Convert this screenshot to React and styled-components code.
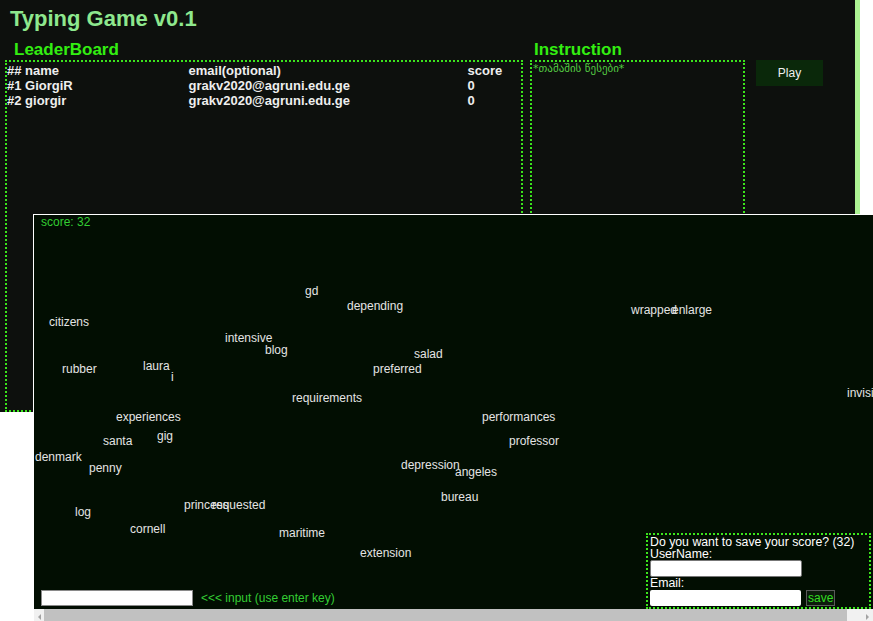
import React from 'react';
import styled, { createGlobalStyle } from 'styled-components';

const GlobalStyle = createGlobalStyle`
  html, body {
    margin: 0;
    padding: 0;
    background: #ffffff;
    overflow: hidden;
  }
  body {
    font-family: 'Liberation Sans', Arial, sans-serif;
  }
`;

const Page = styled.div`
  position: relative;
  width: 873px;
  height: 621px;
  overflow: hidden;
`;

const Main = styled.div`
  width: 860px;
  box-sizing: border-box;
  background: #0d100d;
  border-right: 5px solid #acf393;
  padding: 6px 0 0 5px;
`;

const Title = styled.h1`
  margin: 0 0 0 5px;
  font-size: 22px;
  line-height: 25px;
  font-weight: bold;
  color: #8ee88e;
`;

const Columns = styled.div`
  display: flex;
  align-items: flex-start;
  margin-top: 9px;
`;

const Column = styled.div`
  width: ${(p) => p.width}px;
  margin-left: ${(p) => p.gap || 0}px;
`;

const Heading = styled.h2`
  margin: 0 0 0 ${(p) => p.indent}px;
  font-size: 17px;
  line-height: 20px;
  font-weight: bold;
  color: #33ee11;
`;

const DottedBox = styled.div`
  height: 348px;
  border: 2px dotted #3be41c;
`;

const BoardRow = styled.div`
  display: grid;
  grid-template-columns: 181.5px 279px auto;
  font-size: 13px;
  line-height: 15px;
  font-weight: bold;
  color: #eeeeee;
  &:first-child {
    padding-top: 1px;
  }
`;

const Rules = styled.div`
  padding-left: 1px;
  font-family: 'DejaVu Sans', 'Noto Sans', sans-serif;
  font-size: 11px;
  line-height: 14px;
  color: #55cc44;
`;

const PlayButton = styled.button`
  width: 67px;
  height: 26px;
  margin: 20px 0 0 11px;
  padding: 0;
  border: none;
  background: #0a280a;
  color: #f0f0f0;
  font-family: 'Liberation Sans', Arial, sans-serif;
  font-size: 12px;
`;

const GamePanel = styled.div`
  position: absolute;
  left: 33px;
  top: 214px;
  width: 840px;
  height: 410px;
  box-sizing: border-box;
  border-top: 1px solid #ffffff;
  border-left: 1px solid #ffffff;
  background: #020e02;
  overflow: hidden;
  display: flex;
  flex-direction: column;
`;

const Score = styled.div`
  padding-left: 7px;
  font-size: 12px;
  line-height: 14px;
  color: #33cc33;
`;

const Word = styled.span`
  position: absolute;
  font-size: 12px;
  line-height: 14px;
  color: #e4e4e4;
  white-space: nowrap;
`;

const InputBar = styled.div`
  display: flex;
  align-items: center;
  margin-top: auto;
  margin-bottom: 3px;
  padding-left: 7px;
`;

const WordInput = styled.input`
  width: 152px;
  height: 16px;
  box-sizing: border-box;
  border: 1px solid #8a8a8a;
  background: #ffffff;
  padding: 0;
`;

const Hint = styled.span`
  margin-left: 8px;
  font-size: 12px;
  color: #33cc33;
`;

const ScrollBar = styled.div`
  display: flex;
  align-items: stretch;
  height: 15px;
  flex-shrink: 0;
  background: #f1f1f1;
`;

const ScrollArrow = styled.div`
  display: flex;
  align-items: center;
  justify-content: ${(p) => (p.side === 'left' ? 'flex-start' : 'flex-end')};
  width: ${(p) => p.width}px;
  padding: 0 4px;
  box-sizing: border-box;
  &::before {
    content: '';
    border-top: 3px solid transparent;
    border-bottom: 3px solid transparent;
    ${(p) =>
      p.side === 'left'
        ? 'border-right: 3px solid #a3a3a3;'
        : 'border-left: 3px solid #a3a3a3;'}
  }
`;

const ScrollThumb = styled.div`
  flex: 1;
  background: #c1c1c1;
`;

const SaveBox = styled.div`
  position: absolute;
  right: 2px;
  bottom: 15px;
  width: 225px;
  box-sizing: border-box;
  border: 2px dotted #3be41c;
  padding: 1px 2px 1px;
  font-size: 12.3px;
  line-height: 12px;
  color: #ffffff;
`;

const SaveInput = styled.input`
  display: block;
  width: ${(p) => p.width}px;
  height: ${(p) => p.height}px;
  box-sizing: border-box;
  margin: 0;
  padding: 0;
  background: #ffffff;
  border: ${(p) => (p.focused ? '1px solid #777777' : 'none')};
  border-radius: 2px;
`;

const EmailRow = styled.div`
  display: flex;
  align-items: center;
  gap: 5px;
  margin-top: 1px;
`;

const SaveButton = styled.button`
  width: 29px;
  height: 16px;
  padding: 0 0 0 1px;
  text-align: left;
  background: #0b1a0b;
  border: 1px solid #5a5a5a;
  color: #33dd22;
  font-family: 'Liberation Sans', Arial, sans-serif;
  font-size: 12px;
  line-height: 14px;
`;

const leaders = [
  { rank: '##', name: 'name', email: 'email(optional)', score: 'score' },
  { rank: '#1', name: 'GiorgiR', email: 'grakv2020@agruni.edu.ge', score: '0' },
  { rank: '#2', name: 'giorgir', email: 'grakv2020@agruni.edu.ge', score: '0' },
];

const words = [
  ['gd', 271, 69],
  ['depending', 313, 84],
  ['citizens', 15, 100],
  ['wrapped', 597, 88],
  ['enlarge', 638, 88],
  ['intensive', 191, 116],
  ['blog', 231, 128],
  ['salad', 380, 132],
  ['laura', 109, 144],
  ['i', 137, 155],
  ['rubber', 28, 147],
  ['preferred', 339, 147],
  ['invisible', 813, 171],
  ['requirements', 258, 176],
  ['experiences', 82, 195],
  ['performances', 448, 195],
  ['santa', 69, 219],
  ['gig', 123, 214],
  ['professor', 475, 219],
  ['denmark', 1, 235],
  ['penny', 55, 246],
  ['depression', 367, 243],
  ['angeles', 421, 250],
  ['bureau', 407, 275],
  ['princess', 150, 283],
  ['requested', 178, 283],
  ['log', 41, 290],
  ['cornell', 96, 307],
  ['maritime', 245, 311],
  ['extension', 326, 331],
];

const App = () => {
  return (
    <Page>
      <GlobalStyle />
      <Main>
        <Title>Typing Game v0.1</Title>
        <Columns>
          <Column width={518}>
            <Heading indent={9}>LeaderBoard</Heading>
            <DottedBox>
              {leaders.map((l) => (
                <BoardRow key={l.rank}>
                  <span>
                    {l.rank} {l.name}
                  </span>
                  <span>{l.email}</span>
                  <span>{l.score}</span>
                </BoardRow>
              ))}
            </DottedBox>
          </Column>
          <Column width={215} gap={7}>
            <Heading indent={4}>Instruction</Heading>
            <DottedBox>
              <Rules>*თამაშის წესები*</Rules>
            </DottedBox>
          </Column>
          <PlayButton>Play</PlayButton>
        </Columns>
      </Main>

      <GamePanel>
        <Score>score: 32</Score>
        {words.map(([w, x, y]) => (
          <Word key={w} style={{ left: x, top: y }}>
            {w}
          </Word>
        ))}
        <InputBar>
          <WordInput type='text' />
          <Hint>&lt;&lt;&lt; input (use enter key)</Hint>
        </InputBar>
        <ScrollBar>
          <ScrollArrow side='left' width={10} />
          <ScrollThumb />
          <ScrollArrow side='right' width={26} />
        </ScrollBar>
        <SaveBox>
          <div>Do you want to save your score? (32)</div>
          <div>UserName:</div>
          <SaveInput type='text' width={152} height={17} focused />
          <div>Email:</div>
          <EmailRow>
            <SaveInput type='text' width={151} height={16} />
            <SaveButton>save</SaveButton>
          </EmailRow>
        </SaveBox>
      </GamePanel>
    </Page>
  );
};

export default App;
